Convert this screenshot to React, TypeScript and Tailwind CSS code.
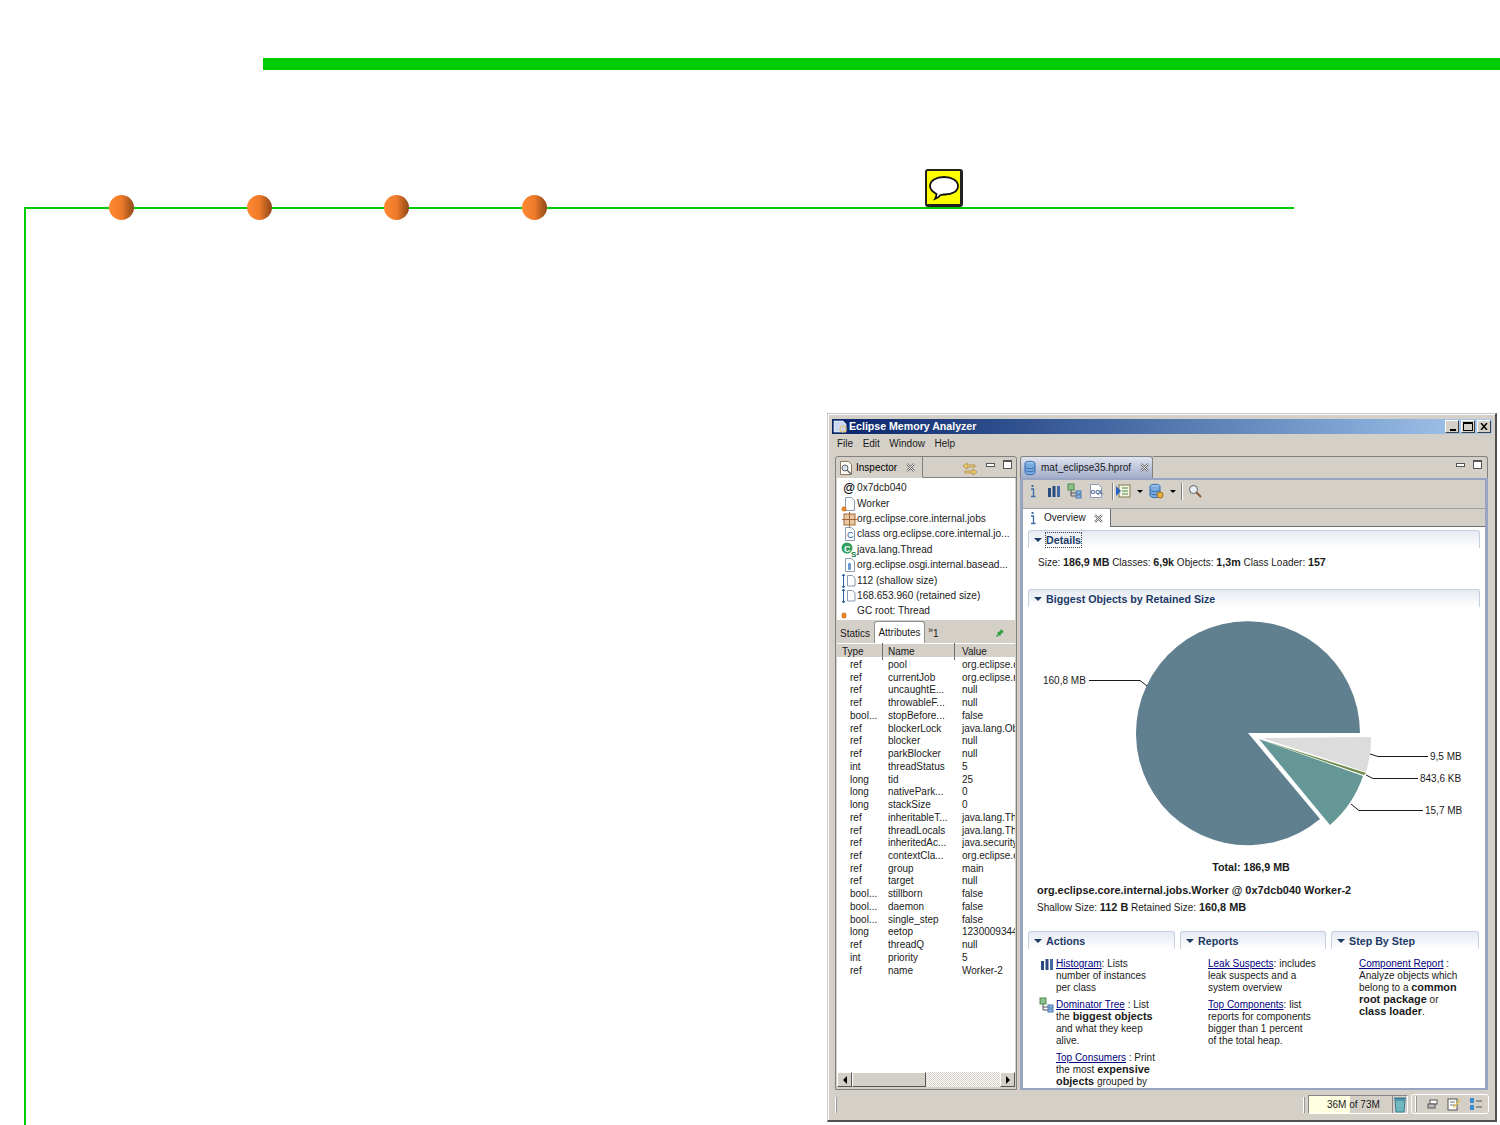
import type { ReactNode } from "react";

const FONT = "[font-family:'Liberation_Sans',Arial,sans-serif]";

const ROWS: [string, string, string][] = [
  ["ref", "pool", "org.eclipse.core"],
  ["ref", "currentJob", "org.eclipse.rcp"],
  ["ref", "uncaughtE...", "null"],
  ["ref", "throwableF...", "null"],
  ["bool...", "stopBefore...", "false"],
  ["ref", "blockerLock", "java.lang.Object"],
  ["ref", "blocker", "null"],
  ["ref", "parkBlocker", "null"],
  ["int", "threadStatus", "5"],
  ["long", "tid", "25"],
  ["long", "nativePark...", "0"],
  ["long", "stackSize", "0"],
  ["ref", "inheritableT...", "java.lang.Thread"],
  ["ref", "threadLocals", "java.lang.Thread"],
  ["ref", "inheritedAc...", "java.security.A"],
  ["ref", "contextCla...", "org.eclipse.osgi"],
  ["ref", "group", "main"],
  ["ref", "target", "null"],
  ["bool...", "stillborn", "false"],
  ["bool...", "daemon", "false"],
  ["bool...", "single_step", "false"],
  ["long", "eetop", "123000934400"],
  ["ref", "threadQ", "null"],
  ["int", "priority", "5"],
  ["ref", "name", "Worker-2"],
];

function Ico({ children, w = 16, h = 16 }: { children: ReactNode; w?: number; h?: number }) {
  return (
    <svg width={w} height={h} viewBox={`0 0 ${w} ${h}`} className="shrink-0">
      {children}
    </svg>
  );
}

const DocShape = () => <path d="M4.5 1.5h6l3 3v10h-9z" fill="#fff" stroke="#8a9ab0" />;
const Bars = () => (
  <>
    <rect x="2" y="5" width="3" height="9" fill="#2b4a80" />
    <rect x="6.5" y="3" width="3" height="11" fill="#2b4a80" />
    <rect x="11" y="3" width="3" height="11" fill="#4468a4" />
  </>
);
const Tree = () => (
  <>
    <rect x="1" y="1" width="6" height="6" fill="#8cc08c" stroke="#4c8a4c" />
    <path d="M4 7v6h5M4 10h5" stroke="#555" fill="none" />
    <rect x="9" y="8" width="5" height="3" fill="#8cb4e0" stroke="#4878b0" />
    <rect x="9" y="12" width="5" height="3" fill="#8cb4e0" stroke="#4878b0" />
  </>
);
const Info = () => (
  <>
    <rect x="6.5" y="2" width="2" height="2" fill="#3a6ea8" />
    <path d="M6 6h2.5v7M6 13.5h4.5" stroke="#3a6ea8" strokeWidth="1.3" fill="none" />
  </>
);
const Db = ({ gear }: { gear?: boolean }) => (
  <>
    <ellipse cx="7" cy="3.5" rx="5" ry="2.2" fill="#9cc4ec" stroke="#3a70b0" />
    <path d="M2 3.5v9c0 1.2 2.2 2.2 5 2.2s5-1 5-2.2v-9M2 6.5c0 1.2 2.2 2.2 5 2.2s5-1 5-2.2M2 9.5c0 1.2 2.2 2.2 5 2.2s5-1 5-2.2" fill="#7aaade" stroke="#3a70b0" />
    {gear && <circle cx="12" cy="12" r="3" fill="#e8b040" stroke="#a06c14" />}
  </>
);
const Magnifier = () => (
  <>
    <circle cx="6.5" cy="6.5" r="4" fill="#e8eef8" stroke="#606060" />
    <path d="M9.5 9.5l4.5 4.5" stroke="#8a5a2a" strokeWidth="2" />
  </>
);
const Orange = () => <rect x="1" y="11" width="4" height="4" rx="1.5" fill="#f08a20" stroke="#b85a10" strokeWidth=".6" />;
const CloseX = () => (
  <Ico w={9} h={9}>
    <path d="M1 1l7 7M8 1l-7 7" stroke="#666" strokeWidth="2.2" />
    <path d="M1 1l7 7M8 1l-7 7" stroke="#fff" strokeWidth=".9" />
  </Ico>
);
const MinMax = ({ gap = "gap-[8px]" }: { gap?: string }) => (
  <div className={`flex items-start ${gap}`}>
    <div className="mt-[3px] h-[4px] w-[9px] border border-[#555] bg-white" />
    <div className="h-[9px] w-[9px] border border-[#555] border-t-2 bg-white" />
  </div>
);

const ListIcons: ReactNode[] = [
  <span key="a" className="text-[12px] leading-none font-bold text-black">@</span>,
  <Ico key="b"><DocShape /><Orange /></Ico>,
  <Ico key="c">
    <rect x="3" y="3" width="11" height="11" fill="#e8c8a0" stroke="#a06838" />
    <path d="M8.5 1v15M1 8.5h15" stroke="#a06838" />
  </Ico>,
  <Ico key="d"><DocShape /><text x="6" y="12" fontSize="9" fill="#2a60a0">C</text></Ico>,
  <Ico key="e">
    <circle cx="6" cy="6" r="5.5" fill="#30a060" />
    <text x="3" y="9.5" fontSize="9" fontWeight="bold" fill="#fff">C</text>
    <text x="10" y="15" fontSize="8" fontWeight="bold" fill="#108040">S</text>
  </Ico>,
  <Ico key="f"><DocShape /><rect x="7" y="6" width="3" height="7" rx="1" fill="#6a9ad0" /></Ico>,
  <Ico key="g"><path d="M2.5 1v14M1 3l1.500-2 1.500 2M1 13l1.500 2 1.500-2" stroke="#2a60a0" fill="none" /><path d="M6.500 2.500h5l2.500 2.500v8h-7.500z" fill="#fff" stroke="#8a9ab0" /></Ico>,
  <Ico key="h"><path d="M2.500 1v14M1 3l1.500-2 1.500 2M1 13l1.500 2 1.500-2" stroke="#2a60a0" fill="none" /><path d="M6.500 2.500h5l2.500 2.500v8h-7.500z" fill="#fff" stroke="#8a9ab0" /></Ico>,
  <Ico key="i"><rect x="1" y="10" width="4" height="5" rx="1.500" fill="#f08a20" stroke="#b85a10" strokeWidth=".6" /></Ico>,
];
const LIST = [
  "0x7dcb040",
  "Worker",
  "org.eclipse.core.internal.jobs",
  "class org.eclipse.core.internal.jo...",
  "java.lang.Thread",
  "org.eclipse.osgi.internal.basead...",
  "112 (shallow size)",
  "168.653.960 (retained size)",
  "GC root: Thread",
];

function InspectorPanel() {
  return (
    <div className="flex h-full w-[182px] shrink-0 flex-col rounded-t-[3px] border border-[#808080]">
      <div className="flex h-[21px] shrink-0">
        <div className="flex w-[87px] items-center gap-[2px] rounded-tl-[3px] border-r border-b border-[#808080] border-b-transparent bg-[#d4d0c8] pt-[1px] pl-[2px] text-black">
          <Ico><path d="M2.500 1.500h8l3 3v10h-11z" fill="#fff" stroke="#8a7a5a" /><circle cx="7" cy="8" r="3" fill="#d8e4f0" stroke="#606060" /><path d="M9 10l4 4" stroke="#606060" strokeWidth="1.500" /></Ico>
          <span>Inspector</span>
          <span className="ml-[7px]"><CloseX /></span>
        </div>
        <div className="flex flex-1 items-start justify-end border-b border-[#808080] pt-[3px] pr-[4px]">
          <span className="mt-[1px] mr-[8px]">
            <Ico>
              <path d="M1 5l4-3v2h8v2H5v2zM15 11l-4-3v2H3v2h8v2z" fill="#f0d070" stroke="#a88030" strokeWidth=".7" />
            </Ico>
          </span>
          <MinMax />
        </div>
      </div>
      <div className="flex min-h-0 flex-1 flex-col px-[1px]">
        <div className="h-[142px] shrink-0 overflow-hidden bg-white pt-[2.500px] text-[10.150px]">
          {LIST.map((t, i) => (
            <div key={t} className="flex h-[15.400px] items-center whitespace-nowrap pl-[4px] text-[#1a1a1a]">
              <span className="flex w-[16px] shrink-0 justify-center">{ListIcons[i]}</span>
              <span>{t}</span>
            </div>
          ))}
        </div>
        <div className="flex h-[23px] shrink-0 items-end text-[#1a1a1a]">
          <span className="mb-[2px] w-[37px] pl-[3px]">Statics</span>
          <span className="flex h-[22px] w-[51px] items-center justify-center rounded-t-[3px] border-x border-t border-[#909090] bg-white pt-[1px]">Attributes</span>
          <span className="mb-[2px] ml-[3px] text-[10px]"><sup className="text-[9px]">»</sup>1</span>
          <span className="mb-[5px] ml-auto mr-[10px]">
            <Ico w={10} h={10}><path d="M6 1l3 3-2 1-2 3-1-1-2 2-1-1 2-2-1-1 3-2z" fill="#30a040" /></Ico>
          </span>
        </div>
        <div className="flex min-h-0 flex-1 flex-col overflow-hidden bg-white">
          <div className="grid h-[14px] shrink-0 grid-cols-[46px_72px_1fr] bg-[#d4d0c8] text-[#1a1a1a] shadow-[inset_0_1px_0_#fff]">
            <span className="border-r border-[#707070] pl-[5px] leading-[17px]">Type</span>
            <span className="border-r border-[#707070] pl-[5px] leading-[17px]">Name</span>
            <span className="pl-[7px] leading-[17px]">Value</span>
          </div>
          <div className="flex-1 pt-[1px]">
            {ROWS.map((r) => (
              <div key={r[1]} className="grid h-[12.740px] grid-cols-[50px_74px_1fr] items-center overflow-hidden whitespace-nowrap text-[#1a1a1a]">
                <span className="pl-[13px]">{r[0]}</span>
                <span className="pl-[1px]">{r[1]}</span>
                <span className="overflow-hidden pl-[1px]">{r[2]}</span>
              </div>
            ))}
          </div>
          <div className="flex h-[15px] shrink-0 items-stretch bg-[repeating-conic-gradient(#d4d0c8_0_25%,#fff_0_50%)] bg-[length:2px_2px]">
            <div className="flex w-[15px] items-center justify-center border border-[#fff] border-r-[#555] border-b-[#555] bg-[#d4d0c8]">
              <div className="h-0 w-0 border-y-[4px] border-r-[4px] border-y-transparent border-r-black" />
            </div>
            <div className="w-[74px] border border-[#fff] border-r-[#555] border-b-[#555] bg-[#d4d0c8]" />
            <div className="flex-1" />
            <div className="flex w-[15px] items-center justify-center border border-[#fff] border-r-[#555] border-b-[#555] bg-[#d4d0c8]">
              <div className="h-0 w-0 border-y-[4px] border-l-[4px] border-y-transparent border-l-black" />
            </div>
          </div>
        </div>
        <div className="h-[2px] shrink-0" />
      </div>
    </div>
  );
}

function SectionHead({ title }: { title: ReactNode }) {
  return (
    <div className="flex h-[18px] items-center gap-[4px] rounded-t-[3px] border-x border-t border-[#c4cfe0] bg-linear-to-b from-[#e6eaf3] to-white pl-[5px] text-[10.700px] font-bold text-[#1c3a66]">
      <span className="h-0 w-0 border-x-[4px] border-t-[4px] border-x-transparent border-t-[#1c3a66]" />
      {title}
    </div>
  );
}

const Lnk = ({ children }: { children: ReactNode }) => <span className="text-[#000080] underline">{children}</span>;

function Item({ icon, children }: { icon?: ReactNode; children: ReactNode }) {
  return (
    <div className="relative mb-[5px] pl-[28px] leading-[12px] whitespace-nowrap text-[#1a1a1a] [&_b]:text-[10.900px] [&_b]:leading-[0]">
      {icon && <span className="absolute top-[-2px] left-[11px]">{icon}</span>}
      {children}
    </div>
  );
}

function Pie() {
  const label = { fontSize: 10, fill: "#1a1a1a", fontFamily: "'Liberation Sans', Arial, sans-serif" };
  return (
    <svg width={451} height={271} viewBox="1028 607 451 271" className="block">
      <path d="M1248 733L1360 733A112 112 0 1 0 1320 819Z" fill="#607f8f" />
      <path d="M1262 738L1371 737A112 112 0 0 1 1366 772Z" fill="#dcdcdc" />
      <path d="M1262 740L1366 773L1364 775Z" fill="#6b8a4a" />
      <path d="M1259 739L1363 776A112 112 0 0 1 1330 825Z" fill="#659797" />
      <g stroke="#1a1a1a" fill="none">
        <path d="M1089 680.500H1140L1147 686" />
        <path d="M1370 754L1378 756.500H1428" />
        <path d="M1366 775L1373 778.500H1418" />
        <path d="M1351 804L1359 810.500H1423" />
      </g>
      <text x="1043" y="684" {...label}>160,8 MB</text>
      <text x="1430" y="760" {...label}>9,5 MB</text>
      <text x="1420" y="782" {...label}>843,6 KB</text>
      <text x="1425" y="814" {...label}>15,7 MB</text>
      <text x="1251" y="871" textAnchor="middle" {...label} fontSize={10.700} fontWeight="bold">Total: 186,9 MB</text>
    </svg>
  );
}

function AnalyzerPanel() {
  return (
    <div className="flex h-full w-[468px] shrink-0 flex-col">
      <div className="flex h-[22px] shrink-0">
        <div className="flex w-[133px] items-center gap-[2px] rounded-t-[3px] border-x border-t border-[#808080] bg-linear-to-b from-[#dfe3ee] to-[#a4aecb] pl-[2px] text-[#1a1a1a]">
          <Ico><Db /></Ico>
          <span>mat_eclipse35.hprof</span>
          <span className="ml-[7px]"><CloseX /></span>
        </div>
        <div className="flex flex-1 justify-end rounded-tr-[3px] border-t border-r border-[#808080] pt-[3px] pr-[5px]">
          <MinMax />
        </div>
      </div>
      <div className="flex min-h-0 flex-1 flex-col border-x-[3px] border-t-[2px] border-b-[2px] border-[#98a4c2]">
        <div className="flex h-[28px] shrink-0 items-start gap-[5px] pt-[3px] pl-[2px]">
          <Ico><Info /></Ico>
          <Ico><Bars /></Ico>
          <Ico><Tree /></Ico>
          <Ico><path d="M2.500 1.500h8l3 3v10h-11z" fill="#fff" stroke="#8a9ab0" /><text x="2.500" y="11" fontSize="6" fontWeight="bold" fill="#3a5a90">OQL</text></Ico>
          <div className="ml-[3px] h-[17px] w-[2px] border-x border-x-[#808080] border-r-white" />
          <span className="ml-[-4px]"><Ico><rect x="4" y="2" width="11" height="12" fill="#f4f4e0" stroke="#7a7a50" /><path d="M7 5h6M7 8h6M7 11h6" stroke="#4a8a4a" /><path d="M1 3l5 5-5 5z" fill="#2a60c0" /></Ico></span>
          <span className="mt-[7px] ml-[1px] h-0 w-0 border-x-[3px] border-t-[3px] border-x-transparent border-t-black" />
          <Ico><Db gear /></Ico>
          <span className="mt-[7px] ml-[1px] h-0 w-0 border-x-[3px] border-t-[3px] border-x-transparent border-t-black" />
          <div className="h-[17px] w-[2px] border-x border-x-[#808080] border-r-white" />
          <span className="ml-[-1px]"><Ico><Magnifier /></Ico></span>
        </div>
        <div className="flex h-[19px] shrink-0 border-t border-[#a0a0a0]">
          <div className="flex w-[87px] items-center gap-[2px] bg-white pl-[2px] text-[#1a1a1a]">
            <Ico><Info /></Ico>
            <span className="mx-[1px]">Overview</span>
            <span className="ml-[5px]"><CloseX /></span>
          </div>
          <div className="flex-1 border-b border-l border-[#707070]" />
        </div>
        <div className="min-h-0 flex-1 overflow-hidden bg-white px-[5px] pt-[3px]">
          <SectionHead title={<span className="outline-1 outline-dotted outline-[#444]">Details</span>} />
          <div className="flex h-[41px] items-start pt-[7px] pl-[10px] text-[#1a1a1a] [&_b]:text-[10.700px]">
            <span>Size: <b>186,9 MB</b> Classes: <b>6,9k</b> Objects: <b>1,3m</b> Class Loader: <b>157</b></span>
          </div>
          <SectionHead title="Biggest Objects by Retained Size" />
          <Pie />
          <div className="h-[18px] pt-[5px] pl-[9px] text-[10.900px] leading-[14px] font-bold text-[#1a1a1a]">org.eclipse.core.internal.jobs.Worker @ 0x7dcb040 Worker-2</div>
          <div className="h-[18px] pt-[4px] pl-[9px] leading-[14px] text-[#1a1a1a] [&_b]:text-[10.900px]">Shallow Size: <b>112 B</b> Retained Size: <b>160,8 MB</b></div>
          <div className="mt-[17px] grid grid-cols-[147px_146px_148px] gap-x-[5px]">
            <div>
              <SectionHead title="Actions" />
              <div className="mt-[9px]">
                <Item icon={<Ico><Bars /></Ico>}><Lnk>Histogram</Lnk>: Lists<br />number of instances<br />per class</Item>
                <Item icon={<Ico><Tree /></Ico>}><Lnk>Dominator Tree</Lnk> : List<br />the <b>biggest objects</b><br />and what they keep<br />alive.</Item>
                <Item><Lnk>Top Consumers</Lnk> : Print<br />the most <b>expensive</b><br /><b>objects</b> grouped by</Item>
              </div>
            </div>
            <div>
              <SectionHead title="Reports" />
              <div className="mt-[9px]">
                <Item><Lnk>Leak Suspects</Lnk>: includes<br />leak suspects and a<br />system overview</Item>
                <Item><Lnk>Top Components</Lnk>: list<br />reports for components<br />bigger than 1 percent<br />of the total heap.</Item>
              </div>
            </div>
            <div>
              <SectionHead title="Step By Step" />
              <div className="mt-[9px]">
                <Item><Lnk>Component Report</Lnk> :<br />Analyze objects which<br />belong to a <b>common</b><br /><b>root package</b> or<br /><b>class loader</b>.</Item>
              </div>
            </div>
          </div>
        </div>
      </div>
    </div>
  );
}

function MatWindow() {
  return (
    <div className={`${FONT} absolute top-[413px] left-[827px] flex h-[709px] w-[670px] flex-col border-t border-l border-t-[#c8c8c8] border-l-[#c8c8c8] border-r-2 border-b-2 border-r-[#505050] border-b-[#505050] bg-[#d4d0c8] pt-[5px] pl-[4px] pr-[3px] text-[10px] leading-[14px] shadow-[inset_1px_1px_0_#fff]`}>
      <div className="flex h-[15px] shrink-0 items-center bg-linear-to-r from-[#0a246a] to-[#a6caf0] pl-[1px] text-[10.600px] font-bold text-white">
        <Ico w={16} h={15}><path d="M1 2h9l3 3v8H1z" fill="#c8d8f0" stroke="#fff" strokeWidth=".6" /><circle cx="10" cy="10" r="3" fill="none" stroke="#e8c070" strokeWidth="1.200" /></Ico>
        <span className="mb-[2px]">Eclipse Memory Analyzer</span>
        <div className="ml-auto flex text-black">
          <div className="mr-[2px] h-[13px] w-[14px] border border-[#fff] border-r-[#404040] border-b-[#404040] bg-[#d4d0c8] pt-[8px] pl-[4px]"><div className="h-[2px] w-[6px] bg-black" /></div>
          <div className="mr-[2px] h-[13px] w-[14px] border border-[#fff] border-r-[#404040] border-b-[#404040] bg-[#d4d0c8] p-[1px]"><div className="h-[9px] w-[10px] border border-t-2 border-black" /></div>
          <div className="mr-[1px] flex h-[13px] w-[14px] items-center justify-center border border-[#fff] border-r-[#404040] border-b-[#404040] bg-[#d4d0c8]">
            <Ico w={8} h={7}><path d="M1 0l6 7M7 0l-6 7" stroke="#000" strokeWidth="1.500" /></Ico>
          </div>
        </div>
      </div>
      <div className="flex h-[18px] shrink-0 items-center gap-[9.500px] pt-[2px] pl-[5px] text-[#1a1a1a]">
        <span>File</span><span>Edit</span><span>Window</span><span>Help</span>
      </div>
      <div className="mt-[4px] flex h-[634px] shrink-0 gap-[3px] pl-[3px]">
        <InspectorPanel />
        <AnalyzerPanel />
      </div>
      <div className="flex flex-1 items-center pl-[3px] text-[#1a1a1a]">
        <div className="h-[16px] w-[2px] border-x border-l-white border-r-[#999]" />
        <div className="ml-auto h-[16px] w-[2px] border-x border-l-white border-r-[#999]" />
        <div className="relative ml-[3px] mb-[2px] flex h-[19px] w-[100px] border border-[#fff] border-t-[#888] border-l-[#888]">
          <div className="w-[41px] bg-[#ffffe1]" />
          <div className="flex-1 border-r border-[#888]" />
          <span className="absolute top-[2px] left-[18px]">36M of 73M</span>
          <span className="w-[14px]"><Ico w={14} h={17}><path d="M2 4h10l-1 12H3z" fill="#70b8c0" stroke="#3a7a98" /><path d="M1 2.500h12" stroke="#3a7a98" strokeWidth="2" /></Ico></span>
        </div>
        <div className="mr-[3px] ml-[3px] mb-[3px] flex h-[20px] w-[78px] items-center gap-[8px] rounded-[3px] border border-white pl-[3px]">
          <div className="mr-[2px] h-[16px] w-[2px] shrink-0 border-x border-l-white border-r-[#999]" />
          <Ico w={12} h={12}><rect x="3" y="2" width="7" height="4" fill="#fff" stroke="#555" /><rect x="1" y="6" width="7" height="4" fill="#bbb" stroke="#555" /></Ico>
          <Ico w={14} h={14}><rect x="1" y="2" width="9" height="11" fill="#fff" stroke="#555" /><path d="M3 5h5M3 8h5" stroke="#777" /><path d="M6 10l7-8 1 1-7 8z" fill="#e8c040" /></Ico>
          <Ico w={14} h={14}><rect x="1" y="1" width="4" height="5" fill="#3a8ad0" /><rect x="1" y="8" width="4" height="5" fill="#3a8ad0" /><path d="M7 4h6M7 10h6" stroke="#555" /></Ico>
        </div>
      </div>
    </div>
  );
}

export default function App() {
  return (
    <div className="relative h-[1125px] w-[1500px] overflow-hidden bg-white pt-[58px]">
      <div className="ml-[263px] h-[12px] bg-[#00cc00]" />
      <div className="relative mt-[137px] ml-[24px] h-[918px] w-[1270px] border-t-2 border-l-2 border-[#00cc00]">
        <div className="absolute top-[-14px] left-[83px] flex gap-[112.500px]">
          {[0, 1, 2, 3].map((i) => (
            <div key={i} className="h-[25px] w-[25px] rounded-full bg-linear-to-r from-[#ff8a33] via-[#ee7a2a] to-[#8f4a18]" />
          ))}
        </div>
        <div className="absolute top-[-40px] left-[899px] flex h-[38px] w-[38px] items-center justify-center rounded-[3px] border-2 border-r-[3px] border-b-[3px] border-[#222] bg-[#ffff00]">
          <svg width="32" height="28" viewBox="0 0 32 28">
            <path d="M16 3c8 0 14 3.500 14 9s-6 8.500-13 8.500c-2 0-3 0-4.500.500C11 23 9 24.500 7 25c1-1.500 1.500-3 1.500-5C5 18 2 15.500 2 12c0-5.500 6-9 14-9z" fill="#fff" stroke="#111" strokeWidth="1.800" />
          </svg>
        </div>
      </div>
      <MatWindow />
    </div>
  );
}
